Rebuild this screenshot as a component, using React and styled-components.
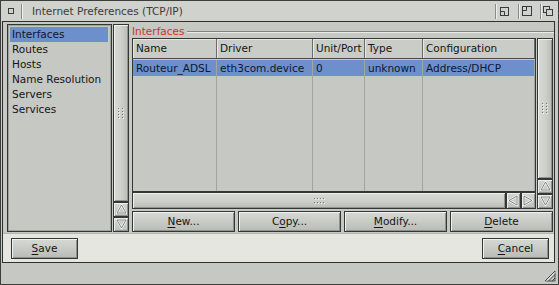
import React from 'react';
import styled, { createGlobalStyle } from 'styled-components';

const Global = createGlobalStyle`
  html, body { margin: 0; padding: 0; background: #c5c8c3; }
  body { font-family: "DejaVu Sans", "Noto Sans", sans-serif; font-size: 10.5px; color: #151515; }
  * { box-sizing: border-box; }
`;

const DARK = '#353735';
const BG = '#c5c8c3';
const BLUE = '#6d8fcb';

const Window = styled.div`
  width: 559px;
  height: 285px;
  border: 1px solid #3c3e3c;
  background: ${BG};
  display: flex;
  flex-direction: column;
`;

const TitleBar = styled.div`
  height: 20px;
  flex: none;
  display: flex;
  align-items: stretch;
  background: #d0d2ce;
`;

const Gadget = styled.div`
  width: ${p => p.$w}px;
  padding-left: ${p => p.$pl}px;
  display: flex;
  align-items: center;
  justify-content: ${p => (p.$center ? 'center' : 'flex-start')};
`;

const TitleSep = styled.div`
  width: 2px;
  margin: 3px 0 2px;
  border-left: 1px solid #8a8c88;
  border-right: 1px solid #eeefec;
`;

const TitleText = styled.div`
  margin-left: 9px;
  line-height: 20px;
  color: #3a3b3a;
  white-space: nowrap;
`;

const Spacer = styled.div`
  flex: 1;
`;

const Frame = styled.div`
  margin: 0 3px 0 1px;
  height: 242px;
  flex: none;
  border: 1px solid #2f312f;
  display: flex;
  flex-direction: column;
`;

const Upper = styled.div`
  height: 211px;
  flex: none;
  display: flex;
  padding: 2px 1px 1px 4px;
`;

const ListBox = styled.div`
  width: 105px;
  border: 1px solid ${DARK};
  box-shadow: inset 0 0 0 1px #9fa29d;
  padding: 2px 3px 2px 2px;
  background: ${BG};
`;

const ListItem = styled.div`
  height: 15px;
  line-height: 15px;
  padding-left: 2px;
  white-space: nowrap;
  background: ${p => (p.$selected ? BLUE : 'transparent')};
  color: ${p => (p.$selected ? '#0e1630' : '#151515')};
`;

const VScroll = styled.div`
  width: 16px;
  margin-left: ${p => p.$ml}px;
  display: flex;
  flex-direction: column;
`;

const VKnob = styled.div`
  flex: 1;
  border: 1px solid ${DARK};
  background: linear-gradient(90deg, #d9dbd7 0%, #cdd0cb 50%, #b9bcb7 100%);
  box-shadow: inset 1px 1px 0 #eef0ec, inset -1px -1px 0 #8f928d;
  display: flex;
  align-items: center;
  justify-content: center;
`;

const HKnob = styled.div`
  flex: 1;
  border: 1px solid ${DARK};
  background: linear-gradient(180deg, #d9dbd7 0%, #cdd0cb 50%, #b9bcb7 100%);
  box-shadow: inset 1px 1px 0 #eef0ec, inset -1px -1px 0 #8f928d;
  display: flex;
  align-items: center;
  justify-content: center;
`;

const ArrowBox = styled.div`
  flex: none;
  width: ${p => p.$w || 16}px;
  height: ${p => p.$h || 15}px;
  border: 1px solid ${DARK};
  background: linear-gradient(180deg, #d3d5d1, #bdc0bb);
  box-shadow: inset 1px 1px 0 #eceeea, inset -1px -1px 0 #8f928d;
  display: flex;
  align-items: center;
  justify-content: center;
`;

const RightGroup = styled.div`
  width: 421px;
  margin-left: 3px;
  display: flex;
  flex-direction: column;
`;

const GroupTitle = styled.div`
  height: 14px;
  flex: none;
  display: flex;
  align-items: center;
`;

const GroupLabel = styled.span`
  color: #d5311d;
  line-height: 14px;
`;

const GroupLine = styled.div`
  flex: 1;
  height: 2px;
  margin: 1px -1px 0 3px;
  border-top: 1px solid #80837e;
  border-bottom: 1px solid #e9ebe7;
`;

const TableArea = styled.div`
  height: 171px;
  flex: none;
  display: flex;
`;

const TableCol = styled.div`
  width: 404px;
  display: flex;
  flex-direction: column;
`;

const Table = styled.div`
  height: 154px;
  flex: none;
  border: 1px solid ${DARK};
  display: flex;
  flex-direction: column;
  background: ${BG};
`;

const HeaderRow = styled.div`
  height: 20px;
  flex: none;
  display: flex;
  border-bottom: 1px solid #4a4c4a;
`;

const HeadCell = styled.div`
  width: ${p => p.$w}px;
  flex: none;
  padding-left: 3px;
  line-height: 19px;
  border-right: 1px solid #6a6c69;
  box-shadow: inset 1px 1px 0 #e6e8e4;
  background: #c9ccc7;
  white-space: nowrap;
  overflow: hidden;
`;

const Body = styled.div`
  flex: 1;
  display: flex;
  flex-direction: column;
  padding-top: 1px;
`;

const Row = styled.div`
  height: ${p => (p.$fill ? 'auto' : '16px')};
  flex: ${p => (p.$fill ? '1' : 'none')};
  display: flex;
`;

const Cell = styled.div`
  width: ${p => p.$w}px;
  flex: none;
  padding-left: 3px;
  line-height: 16px;
  border-right: 1px solid #a2a5a0;
  background: ${p => (p.$selected ? BLUE : 'transparent')};
  color: ${p => (p.$selected ? '#0e1630' : '#151515')};
  white-space: nowrap;
  overflow: hidden;
`;

const HScroll = styled.div`
  height: 17px;
  flex: none;
  display: flex;
`;

const ButtonRow = styled.div`
  height: 21px;
  flex: none;
  margin-top: 2px;
  display: flex;
  gap: 3px;
`;

const Button = styled.div`
  flex: ${p => (p.$w ? 'none' : '1')};
  width: ${p => (p.$w ? `${p.$w}px` : 'auto')};
  height: 21px;
  border: 1px solid ${DARK};
  background: linear-gradient(180deg, #d6d8d4 0%, #c9ccc7 45%, #b8bbb6 100%);
  box-shadow: inset 1px 1px 0 #f0f2ee, inset -1px -1px 0 #8e918c;
  text-align: center;
  line-height: 19px;
  color: #151515;
  white-space: nowrap;
`;

const Key = styled.span`
  text-decoration: underline;
  text-underline-offset: 2px;
`;

const Band = styled.div`
  flex: 1;
  border-top: 1px solid #b4b6b1;
  background: #e6e6e0;
  display: flex;
  justify-content: space-between;
  align-items: flex-start;
  padding: 4px 5px 0 8px;
`;

const BottomBorder = styled.div`
  flex: 1;
  display: flex;
  justify-content: flex-end;
  align-items: flex-end;
  padding: 0 2px 2px 0;
`;

const Grip = ({ horizontal }) =>
  horizontal ? (
    <svg width="11" height="6" viewBox="0 0 11 6">
      {[0, 3, 6, 9].map(x =>
        [0, 4].map(y => (
          <g key={`${x}-${y}`}>
            <rect x={x} y={y} width="1" height="1" fill="#7b7e79" />
            <rect x={x + 1} y={y + 1} width="1" height="1" fill="#f4f5f2" />
          </g>
        ))
      )}
    </svg>
  ) : (
    <svg width="6" height="11" viewBox="0 0 6 11">
      {[0, 3, 6, 9].map(y =>
        [0, 4].map(x => (
          <g key={`${x}-${y}`}>
            <rect x={x} y={y} width="1" height="1" fill="#7b7e79" />
            <rect x={x + 1} y={y + 1} width="1" height="1" fill="#f4f5f2" />
          </g>
        ))
      )}
    </svg>
  );

const Arrow = ({ dir }) => {
  const pts = {
    up: '5.5,1 10,9 1,9',
    down: '1,1 10,1 5.5,9',
    left: '1,5.5 9,1 9,10',
    right: '1,1 9,5.5 1,10',
  }[dir];
  return (
    <svg width="11" height="11" viewBox="0 0 11 11">
      <polygon points={pts} fill="#c9ccc7" stroke="#f6f7f4" strokeWidth="2.2" strokeLinejoin="round" />
      <polygon points={pts} fill="none" stroke="#747772" strokeWidth="0.9" strokeLinejoin="round" />
    </svg>
  );
};

const ScrollV = ({ ml }) => (
  <VScroll $ml={ml}>
    <VKnob>
      <Grip />
    </VKnob>
    <ArrowBox>
      <Arrow dir="up" />
    </ArrowBox>
    <ArrowBox>
      <Arrow dir="down" />
    </ArrowBox>
  </VScroll>
);

const cols = [
  { w: 84, label: 'Name', value: 'Routeur_ADSL' },
  { w: 96, label: 'Driver', value: 'eth3com.device' },
  { w: 52, label: 'Unit/Port', value: '0' },
  { w: 58, label: 'Type', value: 'unknown' },
  { w: 112, label: 'Configuration', value: 'Address/DHCP' },
];

const listItems = ['Interfaces', 'Routes', 'Hosts', 'Name Resolution', 'Servers', 'Services'];

const KeyLabel = ({ text, k }) => (
  <>
    {text.slice(0, k)}
    <Key>{text[k]}</Key>
    {text.slice(k + 1)}
  </>
);

export default function App() {
  return (
    <>
      <Global />
      <Window>
        <TitleBar>
          <Gadget $w={20} $pl={0} $center>
            <svg width="6" height="6" viewBox="0 0 6 6">
              <rect x="0.5" y="0.5" width="5" height="5" fill="none" stroke="#3a3b3a" />
            </svg>
          </Gadget>
          <TitleSep />
          <TitleText>Internet Preferences (TCP/IP)</TitleText>
          <Spacer />
          <TitleSep />
          <Gadget $w={21} $pl={3}>
            <svg width="9" height="9" viewBox="0 0 9 9">
              <rect x="0.5" y="0.5" width="8" height="8" fill="none" stroke="#3a3b3a" />
              <path d="M0.5 4.5 H4.5 V8.5" fill="none" stroke="#3a3b3a" />
            </svg>
          </Gadget>
          <TitleSep />
          <Gadget $w={20} $pl={2}>
            <svg width="10" height="10" viewBox="0 0 10 10">
              <rect x="0.5" y="0.5" width="9" height="9" fill="none" stroke="#3a3b3a" />
              <path d="M0.5 4.5 H4.5 V0.5" fill="none" stroke="#3a3b3a" />
            </svg>
          </Gadget>
          <TitleSep />
          <Gadget $w={16} $pl={1}>
            <svg width="10" height="10" viewBox="0 0 10 10">
              <rect x="0.5" y="0.5" width="6" height="6" fill="none" stroke="#3a3b3a" />
              <rect x="3.5" y="3.5" width="6" height="6" fill="#d0d2ce" stroke="#3a3b3a" />
            </svg>
          </Gadget>
        </TitleBar>
        <Frame>
          <Upper>
            <ListBox>
              {listItems.map((t, i) => (
                <ListItem key={t} $selected={i === 0}>
                  {t}
                </ListItem>
              ))}
            </ListBox>
            <ScrollV ml={1} />
            <RightGroup>
              <GroupTitle>
                <GroupLabel>Interfaces</GroupLabel>
                <GroupLine />
              </GroupTitle>
              <TableArea>
                <TableCol>
                  <Table>
                    <HeaderRow>
                      {cols.map(c => (
                        <HeadCell key={c.label} $w={c.w}>
                          {c.label}
                        </HeadCell>
                      ))}
                    </HeaderRow>
                    <Body>
                      <Row>
                        {cols.map(c => (
                          <Cell key={c.label} $w={c.w} $selected>
                            {c.value}
                          </Cell>
                        ))}
                      </Row>
                      <Row $fill>
                        {cols.map(c => (
                          <Cell key={c.label} $w={c.w} />
                        ))}
                      </Row>
                    </Body>
                  </Table>
                  <HScroll>
                    <HKnob>
                      <Grip horizontal />
                    </HKnob>
                    <ArrowBox $w={15} $h={17}>
                      <Arrow dir="left" />
                    </ArrowBox>
                    <ArrowBox $w={15} $h={17}>
                      <Arrow dir="right" />
                    </ArrowBox>
                  </HScroll>
                </TableCol>
                <ScrollV ml={1} />
              </TableArea>
              <ButtonRow>
                <Button><KeyLabel text="New..." k={0} /></Button>
                <Button><KeyLabel text="Copy..." k={1} /></Button>
                <Button><KeyLabel text="Modify..." k={0} /></Button>
                <Button><KeyLabel text="Delete" k={0} /></Button>
              </ButtonRow>
            </RightGroup>
          </Upper>
          <Band>
            <Button $w={67}><KeyLabel text="Save" k={0} /></Button>
            <Button $w={67}><KeyLabel text="Cancel" k={0} /></Button>
          </Band>
        </Frame>
        <BottomBorder>
          <svg width="12" height="12" viewBox="0 0 12 12">
            <path d="M11 1 L1 11 H11 Z" fill="none" stroke="#4a4c4a" strokeWidth="1" />
            <path d="M11 4.5 L4.5 11 M11 8 L8 11" stroke="#4a4c4a" strokeWidth="1" />
            <path d="M11.5 2 L2 11.5" stroke="#f2f3f0" strokeWidth="0.8" />
          </svg>
        </BottomBorder>
      </Window>
    </>
  );
}
